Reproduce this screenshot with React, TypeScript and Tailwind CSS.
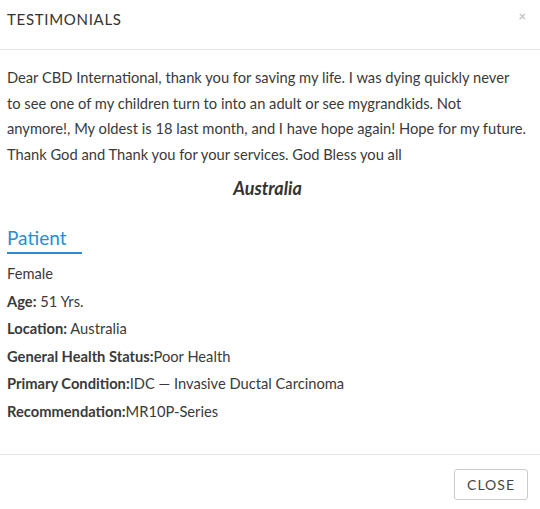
import React from "react";

const rows: { label?: string; value: string }[] = [
  { value: "Female" },
  { label: "Age:", value: " 51 Yrs." },
  { label: "Location:", value: " Australia" },
  { label: "General Health Status:", value: "Poor Health" },
  { label: "Primary Condition:", value: "IDC — Invasive Ductal Carcinoma" },
  { label: "Recommendation:", value: "MR10P-Series" },
];

const App = () => {
  return (
    <div className="w-[540px] h-[509px] bg-white font-['Lato',sans-serif] text-[#3a3a3a] flex flex-col">
      <div className="h-[50px] border-b border-[#e5e5e5] flex items-center justify-between pl-[7px] pr-[14px]">
        <h4 className="text-[15px] tracking-[0.7px] text-[#333] mt-[-10px]">TESTIMONIALS</h4>
        <button className="text-[#c4c4c4] text-[13px] font-bold mt-[-16px] leading-none">×</button>
      </div>

      <div className="flex-1 pl-[7px] pr-[8px] pt-[15px]">
        <p className="text-[14.7px] leading-[25.5px]">
          Dear CBD International, thank you for saving my life. I was dying quickly never
          <br />
          to see one of my children turn to into an adult or see mygrandkids. Not
          <br />
          anymore!, My oldest is 18 last month, and I have hope again! Hope for my future.
          <br />
          Thank God and Thank you for your services. God Bless you all
        </p>
        <p className="mt-[8px] text-center text-[18px] font-bold italic text-[#333] pr-[4px]">Australia</p>

        <div className="mt-[23px]">
          <h3 className="inline-block text-[19px] text-[#2a8dd4] leading-[26px] border-b-2 border-[#2a8dd4] pr-[16px] pb-[1px]">
            Patient
          </h3>
        </div>

        <div className="mt-[6px] flex flex-col">
          {rows.map((r, i) => (
            <p key={i} className="text-[14.7px] leading-[27.6px]">
              {r.label && <span className="font-bold">{r.label}</span>}
              {r.value}
            </p>
          ))}
        </div>
      </div>

      <div className="h-[55px] border-t border-[#e5e5e5] flex items-start justify-end pr-[12px] pt-[14px]">
        <button className="h-[31px] px-[12px] border border-[#ccc] rounded-[3px] text-[14px] tracking-[1px] text-[#444]">
          CLOSE
        </button>
      </div>
    </div>
  );
};

export default App;
